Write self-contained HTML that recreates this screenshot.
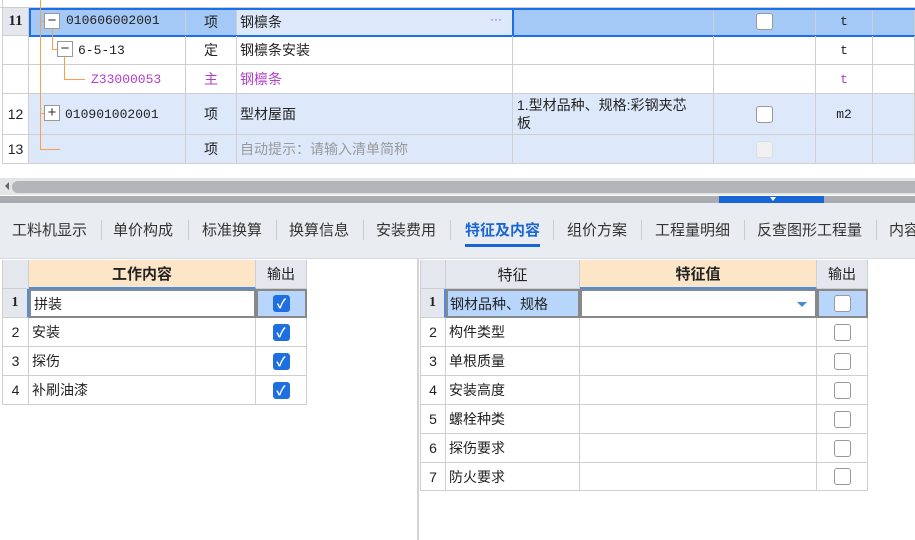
<!DOCTYPE html>
<html><head><meta charset="utf-8">
<style>
*{margin:0;padding:0;box-sizing:border-box}
body{width:915px;height:540px;overflow:hidden;background:#fff;position:relative;font-family:"Liberation Sans","Noto Sans CJK SC",sans-serif;font-size:14px;color:#222}
.a{position:absolute}
.c{position:absolute;border-right:1px solid #cfcfcf;border-bottom:1px solid #cfcfcf;display:flex;align-items:center;white-space:nowrap;overflow:hidden}
.cen{justify-content:center}
.mono{font-family:"Liberation Mono","DejaVu Sans Mono",monospace;font-size:13px}
.o{position:absolute;background:#f5a24a}
.box{position:absolute;width:16px;height:16px;border:1px solid #999;background:#fff;font-size:15px;line-height:13px;text-align:center;color:#333}
.cb{width:17px;height:17px;border:1px solid #999;border-radius:3px;background:#fff}
.cbc{width:17px;height:17px;border-radius:3px;background:#1e6fe0;color:#fff;font-size:13px;line-height:17px;text-align:center;font-weight:bold}
.tab{position:absolute;top:219px;font-size:15px;color:#333;white-space:nowrap}
.sep{position:absolute;top:220px;width:1px;height:20px;background:#c9ccd1}
</style></head><body>
<div class="a" style="left:0;top:0;width:915px;height:8px;border-bottom:1px solid #cfcfcf"></div>
<div class="a" style="left:2px;top:0;width:27px;height:164px;border-left:1px solid #cfcfcf"></div>
<div class="c cen" style="left:2px;top:8px;width:27px;height:28px;background:#e4e8ee;font-weight:bold;font-family:'Liberation Serif',serif;font-size:15px;border-left:1px solid #cfcfcf">11</div>
<div class="c" style="left:29px;top:8px;width:157px;height:28px;background:#a5c9f6"></div>
<div class="c cen" style="left:186px;top:8px;width:51px;height:28px;background:#a5c9f6">项</div>
<div class="c" style="left:237px;top:8px;width:276px;height:28px;background:#dde9fb;padding-left:3px">钢檩条<span style="position:absolute;right:10px;color:#3a7fd8;font-size:12px;top:4px">···</span></div>
<div class="c" style="left:513px;top:8px;width:201px;height:28px;background:#a5c9f6"></div>
<div class="c cen" style="left:714px;top:8px;width:102px;height:28px;background:#a5c9f6"><div class="cb"></div></div>
<div class="c cen mono" style="left:816px;top:8px;width:57px;height:28px;background:#a5c9f6">t</div>
<div class="c" style="left:873px;top:8px;width:42px;height:28px;background:#a5c9f6"></div>
<div class="a" style="left:29px;top:8px;width:485px;height:29px;border:2px solid #1a70ea"></div>
<div class="a" style="left:512px;top:8px;width:403px;height:29px;border:2px solid #1a70ea;border-right:none"></div>
<div class="c" style="left:2px;top:36px;width:27px;height:29px;border-left:1px solid #cfcfcf"></div>
<div class="c" style="left:29px;top:36px;width:157px;height:29px;padding-left:49px" ><span class="mono">6-5-13</span></div>
<div class="c cen" style="left:186px;top:36px;width:51px;height:29px">定</div>
<div class="c" style="left:237px;top:36px;width:276px;height:29px;padding-left:3px">钢檩条安装</div>
<div class="c" style="left:513px;top:36px;width:201px;height:29px"></div>
<div class="c" style="left:714px;top:36px;width:102px;height:29px"></div>
<div class="c cen mono" style="left:816px;top:36px;width:57px;height:29px">t</div>
<div class="c" style="left:873px;top:36px;width:42px;height:29px"></div>
<div class="c" style="left:2px;top:65px;width:27px;height:29px;border-left:1px solid #cfcfcf"></div>
<div class="c" style="left:29px;top:65px;width:157px;height:29px;padding-left:62px;color:#b040c8"><span class="mono">Z33000053</span></div>
<div class="c cen" style="left:186px;top:65px;width:51px;height:29px;color:#b040c8">主</div>
<div class="c" style="left:237px;top:65px;width:276px;height:29px;padding-left:3px;color:#b040c8">钢檩条</div>
<div class="c" style="left:513px;top:65px;width:201px;height:29px"></div>
<div class="c" style="left:714px;top:65px;width:102px;height:29px"></div>
<div class="c cen mono" style="left:816px;top:65px;width:57px;height:29px;color:#b040c8">t</div>
<div class="c" style="left:873px;top:65px;width:42px;height:29px"></div>
<div class="c cen" style="left:2px;top:94px;width:27px;height:41px;border-left:1px solid #cfcfcf">12</div>
<div class="c" style="left:29px;top:94px;width:157px;height:41px;background:#dde9fb;padding-left:36px"><span class="mono">010901002001</span></div>
<div class="c cen" style="left:186px;top:94px;width:51px;height:41px;background:#dde9fb">项</div>
<div class="c" style="left:237px;top:94px;width:276px;height:41px;background:#dde9fb;padding-left:3px">型材屋面</div>
<div class="c" style="left:513px;top:94px;width:201px;height:41px;background:#dde9fb;padding-left:4px;align-items:flex-start;padding-top:2px"><span style="display:block;width:180px;white-space:normal;line-height:18px;font-size:14px;word-break:break-all">1.型材品种、规格:彩钢夹芯板</span></div>
<div class="c cen" style="left:714px;top:94px;width:102px;height:41px;background:#dde9fb"><div class="cb"></div></div>
<div class="c cen mono" style="left:816px;top:94px;width:57px;height:41px;background:#dde9fb">m2</div>
<div class="c" style="left:873px;top:94px;width:42px;height:41px;background:#dde9fb"></div>
<div class="c cen" style="left:2px;top:135px;width:27px;height:29px;border-left:1px solid #cfcfcf">13</div>
<div class="c" style="left:29px;top:135px;width:157px;height:29px;background:#dde9fb"></div>
<div class="c cen" style="left:186px;top:135px;width:51px;height:29px;background:#dde9fb">项</div>
<div class="c" style="left:237px;top:135px;width:276px;height:29px;background:#dde9fb;padding-left:3px;color:#999">自动提示：请输入清单简称</div>
<div class="c" style="left:513px;top:135px;width:201px;height:29px;background:#dde9fb"></div>
<div class="c cen" style="left:714px;top:135px;width:102px;height:29px;background:#dde9fb"><div class="cb" style="background:#f0f0f0;border-color:#ddd"></div></div>
<div class="c" style="left:816px;top:135px;width:57px;height:29px;background:#dde9fb"></div>
<div class="c" style="left:873px;top:135px;width:42px;height:29px;background:#dde9fb"></div>
<div class="o" style="left:40px;top:0;width:1px;height:150px"></div>
<div class="o" style="left:40px;top:149px;width:20px;height:1px"></div>
<div class="o" style="left:40px;top:21px;width:5px;height:1px"></div>
<div class="o" style="left:40px;top:113px;width:5px;height:1px"></div>
<div class="o" style="left:52px;top:29px;width:1px;height:21px"></div>
<div class="o" style="left:52px;top:49px;width:6px;height:1px"></div>
<div class="o" style="left:64px;top:57px;width:1px;height:23px"></div>
<div class="o" style="left:64px;top:79px;width:21px;height:1px"></div>
<div class="box" style="left:44px;top:13px">−</div>
<div class="a mono" style="left:66px;top:13px">010606002001</div>
<div class="box" style="left:57px;top:41px">−</div>
<div class="box" style="left:44px;top:105px">+</div>
<div class="a" style="left:0;top:178px;width:915px;height:17px;background:#e4e5e7"></div>
<div class="a" style="left:5px;top:182px;width:0;height:0;border-top:4px solid transparent;border-bottom:4px solid transparent;border-right:4px solid #666"></div>
<div class="a" style="left:12px;top:181px;width:903px;height:12px;background:#b3b5b8;border-radius:6px 0 0 6px"></div>
<div class="a" style="left:0;top:196px;width:915px;height:7px;background:#a9acb0"></div>
<div class="a" style="left:719px;top:196px;width:105px;height:7px;background:#1a65d6"></div>
<div class="a" style="left:770px;top:197px;width:0;height:0;border-left:3px solid transparent;border-right:3px solid transparent;border-top:4px solid #fff"></div>
<div class="a" style="left:0;top:203px;width:915px;height:56px;background:#e9ecf0;border-bottom:1px solid #d6d9dd"></div>
<div class="tab" style="left:12px">工料机显示</div><div class="sep" style="left:101px"></div>
<div class="tab" style="left:113px">单价构成</div><div class="sep" style="left:188px"></div>
<div class="tab" style="left:202px">标准换算</div><div class="sep" style="left:276px"></div>
<div class="tab" style="left:289px">换算信息</div><div class="sep" style="left:363px"></div>
<div class="tab" style="left:376px">安装费用</div><div class="sep" style="left:450px"></div>
<div class="tab" style="left:465px;color:#1a65d6;font-weight:bold">特征及内容</div><div class="sep" style="left:553px"></div>
<div class="a" style="left:465px;top:244px;width:75px;height:3px;background:#1a65d6"></div>
<div class="tab" style="left:567px">组价方案</div><div class="sep" style="left:641px"></div>
<div class="tab" style="left:655px">工程量明细</div><div class="sep" style="left:744px"></div>
<div class="tab" style="left:757px">反查图形工程量</div><div class="sep" style="left:876px"></div>
<div class="tab" style="left:889px">内容</div>
<div class="a" style="left:417px;top:259px;width:2px;height:281px;background:#d4d4d4"></div>
<div class="c" style="left:2px;top:260px;width:27px;height:29px;background:#e4e8ee;border-left:1px solid #cfcfcf"></div>
<div class="c cen" style="left:29px;top:260px;width:227px;height:29px;background:#fde6c8;font-weight:bold;font-size:15px;border-bottom:2px solid #4a90e2">工作内容</div>
<div class="c cen" style="left:256px;top:260px;width:51px;height:29px;background:#e4e8ee">输出</div>
<div class="c cen" style="left:2px;top:289px;width:27px;height:29px;background:#e4e8ee;font-weight:bold;font-family:'Liberation Serif',serif;border-left:1px solid #cfcfcf;border-right:2px solid #4a90e2">1</div>
<div class="c" style="left:29px;top:289px;width:227px;height:29px;padding-left:3px;border:2px solid #888">拼装</div>
<div class="c cen" style="left:256px;top:289px;width:51px;height:29px;background:#b8d6fb;border:2px solid #888"><div class="cbc">✓</div></div>
<div class="c cen" style="left:2px;top:318px;width:27px;height:29px;border-left:1px solid #cfcfcf">2</div>
<div class="c" style="left:29px;top:318px;width:227px;height:29px;padding-left:3px">安装</div>
<div class="c cen" style="left:256px;top:318px;width:51px;height:29px"><div class="cbc">✓</div></div>
<div class="c cen" style="left:2px;top:347px;width:27px;height:29px;border-left:1px solid #cfcfcf">3</div>
<div class="c" style="left:29px;top:347px;width:227px;height:29px;padding-left:3px">探伤</div>
<div class="c cen" style="left:256px;top:347px;width:51px;height:29px"><div class="cbc">✓</div></div>
<div class="c cen" style="left:2px;top:376px;width:27px;height:29px;border-left:1px solid #cfcfcf">4</div>
<div class="c" style="left:29px;top:376px;width:227px;height:29px;padding-left:3px">补刷油漆</div>
<div class="c cen" style="left:256px;top:376px;width:51px;height:29px"><div class="cbc">✓</div></div>
<div class="c" style="left:420px;top:260px;width:26px;height:29px;background:#e4e8ee;border-left:1px solid #cfcfcf"></div>
<div class="c cen" style="left:446px;top:260px;width:134px;height:29px;background:#e4e8ee;font-size:15px">特征</div>
<div class="c cen" style="left:580px;top:260px;width:237px;height:29px;background:#fde6c8;font-weight:bold;font-size:15px;border-bottom:2px solid #4a90e2">特征值</div>
<div class="c cen" style="left:817px;top:260px;width:51px;height:29px;background:#e4e8ee">输出</div>
<div class="c cen" style="left:420px;top:289px;width:26px;height:29px;background:#e4e8ee;font-weight:bold;font-family:'Liberation Serif',serif;border-left:1px solid #cfcfcf;border-right:2px solid #4a90e2">1</div>
<div class="c" style="left:446px;top:289px;width:134px;height:29px;padding-left:2px;background:#b8d6fb;border:2px solid #888">钢材品种、规格</div>
<div class="c" style="left:580px;top:289px;width:237px;height:29px;border:2px solid #888"><span style="position:absolute;right:8px;top:11px;width:0;height:0;border-left:5px solid transparent;border-right:5px solid transparent;border-top:5px solid #4a8ad0"></span></div>
<div class="c cen" style="left:817px;top:289px;width:51px;height:29px;background:#b8d6fb;border:2px solid #888"><div class="cb"></div></div>
<div class="c cen" style="left:420px;top:318px;width:26px;height:29px;border-left:1px solid #cfcfcf">2</div>
<div class="c" style="left:446px;top:318px;width:134px;height:29px;padding-left:3px">构件类型</div>
<div class="c" style="left:580px;top:318px;width:237px;height:29px"></div>
<div class="c cen" style="left:817px;top:318px;width:51px;height:29px"><div class="cb"></div></div>
<div class="c cen" style="left:420px;top:347px;width:26px;height:29px;border-left:1px solid #cfcfcf">3</div>
<div class="c" style="left:446px;top:347px;width:134px;height:29px;padding-left:3px">单根质量</div>
<div class="c" style="left:580px;top:347px;width:237px;height:29px"></div>
<div class="c cen" style="left:817px;top:347px;width:51px;height:29px"><div class="cb"></div></div>
<div class="c cen" style="left:420px;top:376px;width:26px;height:29px;border-left:1px solid #cfcfcf">4</div>
<div class="c" style="left:446px;top:376px;width:134px;height:29px;padding-left:3px">安装高度</div>
<div class="c" style="left:580px;top:376px;width:237px;height:29px"></div>
<div class="c cen" style="left:817px;top:376px;width:51px;height:29px"><div class="cb"></div></div>
<div class="c cen" style="left:420px;top:405px;width:26px;height:29px;border-left:1px solid #cfcfcf">5</div>
<div class="c" style="left:446px;top:405px;width:134px;height:29px;padding-left:3px">螺栓种类</div>
<div class="c" style="left:580px;top:405px;width:237px;height:29px"></div>
<div class="c cen" style="left:817px;top:405px;width:51px;height:29px"><div class="cb"></div></div>
<div class="c cen" style="left:420px;top:434px;width:26px;height:29px;border-left:1px solid #cfcfcf">6</div>
<div class="c" style="left:446px;top:434px;width:134px;height:29px;padding-left:3px">探伤要求</div>
<div class="c" style="left:580px;top:434px;width:237px;height:29px"></div>
<div class="c cen" style="left:817px;top:434px;width:51px;height:29px"><div class="cb"></div></div>
<div class="c cen" style="left:420px;top:463px;width:26px;height:28px;border-left:1px solid #cfcfcf">7</div>
<div class="c" style="left:446px;top:463px;width:134px;height:28px;padding-left:3px">防火要求</div>
<div class="c" style="left:580px;top:463px;width:237px;height:28px"></div>
<div class="c cen" style="left:817px;top:463px;width:51px;height:28px"><div class="cb"></div></div>
</body></html>
